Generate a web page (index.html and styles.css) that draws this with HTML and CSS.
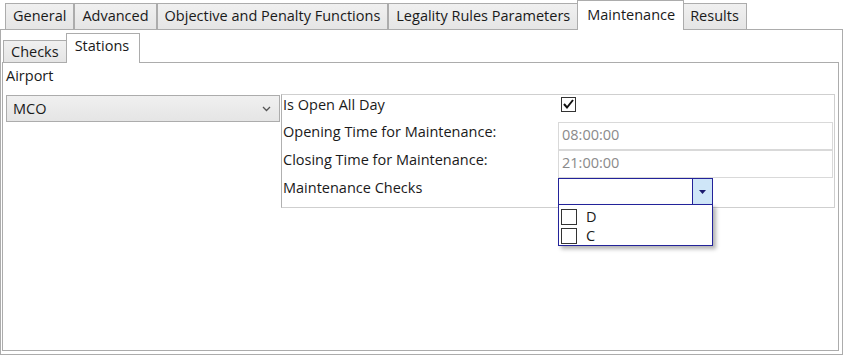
FILE: index.html
```html
<!DOCTYPE html>
<html lang="en">
<head>
    <meta charset="UTF-8">
    <title>Maintenance - Stations</title>
    <link rel="stylesheet" href="styles.css">
</head>
<body>
    <div class="tab-control">
        <div class="tab-strip main-strip">
            <div class="tab">General</div>
            <div class="tab">Advanced</div>
            <div class="tab">Objective and Penalty Functions</div>
            <div class="tab">Legality Rules Parameters</div>
            <div class="tab active">Maintenance</div>
            <div class="tab">Results</div>
        </div>
        <div class="tab-panel outer-panel">
            <div class="tab-strip sub-strip">
                <div class="tab">Checks</div>
                <div class="tab active">Stations</div>
            </div>
            <div class="tab-panel inner-panel">
                <div class="field-label">Airport</div>
                <div class="station-row">
                    <div class="combo airport-combo">
                        <span>MCO</span>
                        <svg class="chevron" width="9" height="6" viewBox="0 0 9 6"><path d="M1 1 L4.5 4.5 L8 1" fill="none" stroke="#555" stroke-width="1.3"/></svg>
                    </div>
                    <div class="prop-grid">
                        <div class="prop-row first">
                            <div class="prop-name">Is Open All Day</div>
                            <div class="prop-value">
                                <span class="checkbox checked">
                                    <svg width="13" height="12" viewBox="0 0 13 12"><path d="M2 6 L5 9.5 L11 2" fill="none" stroke="#111" stroke-width="2"/></svg>
                                </span>
                            </div>
                        </div>
                        <div class="prop-row">
                            <div class="prop-name">Opening Time for Maintenance:</div>
                            <div class="prop-value"><div class="textbox disabled">08:00:00</div></div>
                        </div>
                        <div class="prop-row">
                            <div class="prop-name">Closing Time for Maintenance:</div>
                            <div class="prop-value"><div class="textbox disabled">21:00:00</div></div>
                        </div>
                        <div class="prop-row">
                            <div class="prop-name">Maintenance Checks</div>
                            <div class="prop-value">
                                <div class="check-combo">
                                    <div class="check-combo-text"></div>
                                    <div class="check-combo-button">
                                        <svg width="7" height="4" viewBox="0 0 7 4"><path d="M0 0 H7 L3.5 4 Z" fill="#1b1b6e"/></svg>
                                    </div>
                                    <div class="check-popup">
                                        <div class="check-item"><span class="checkbox"></span>D</div>
                                        <div class="check-item"><span class="checkbox"></span>C</div>
                                    </div>
                                </div>
                            </div>
                        </div>
                    </div>
                </div>
            </div>
        </div>
    </div>
</body>
</html>
```

FILE: styles.css
```css
body {
    margin: 0;
    background: #fff;
    font-family: 'Open Sans', 'Noto Sans', sans-serif;
    font-size: 14.5px;
    color: #1a1a1a;
}

.tab-control {
    width: 843px;
    height: 355px;
    display: flex;
    flex-direction: column;
}

.tab-strip {
    display: flex;
    align-items: flex-end;
}

.main-strip {
    height: 29px;
    padding-left: 5px;
}

.tab {
    height: 26px;
    line-height: 24px;
    padding: 0 7px;
    border: 1px solid #acacac;
    border-bottom: none;
    background: linear-gradient(#f0f0f0, #e5e5e5);
    box-sizing: border-box;
    margin-right: -1px;
    white-space: nowrap;
}

.tab + .tab {
    margin-left: 1px;
}

.tab.active {
    height: 30px;
    line-height: 27px;
    background: #fff;
    margin-bottom: -1px;
    margin-left: 0;
    margin-right: -2px;
    padding: 0 8px 0 9px;
    position: relative;
    z-index: 1;
}

.tab.active + .tab {
    margin-left: 0;
}

.tab-panel {
    border: 1px solid #acacac;
    background: #fff;
    box-sizing: border-box;
}

.outer-panel {
    flex: 1;
    display: flex;
    flex-direction: column;
    padding: 3px 3px 3px 1px;
}

.sub-strip {
    height: 29px;
    padding-left: 1px;
}

.sub-strip .tab {
    height: 22px;
    line-height: 21px;
    padding: 0 8px 0 7px;
}

.sub-strip .tab.active {
    height: 30px;
    line-height: 24px;
    padding: 0 10px 0 8px;
    margin-left: -1px;
}

.inner-panel {
    flex: 1;
    padding: 2px 2px 0 3px;
}

.field-label {
    height: 29px;
    line-height: 22px;
}

.station-row {
    display: flex;
    align-items: flex-start;
}

.combo {
    box-sizing: border-box;
}

.airport-combo {
    width: 274px;
    height: 27px;
    margin-top: 1px;
    border: 1px solid #acacac;
    background: linear-gradient(#f0f0f0, #e5e5e5);
    display: flex;
    align-items: center;
    justify-content: space-between;
    padding: 0 8px 0 6px;
}

.chevron {
    margin-top: 1px;
}

.prop-grid {
    width: 554px;
    margin-left: 1px;
    border: 1px solid #cfcfcf;
    border-left-color: #b0b0b0;
    box-sizing: border-box;
    padding-bottom: 1px;
}

.prop-row {
    display: flex;
    height: 28px;
}

.prop-row.first {
    height: 27px;
}

.prop-name {
    width: 275px;
    padding-left: 1px;
    line-height: 20px;
}

.prop-value {
    flex: 1;
}

.checkbox {
    display: inline-flex;
    align-items: center;
    justify-content: center;
    width: 15px;
    height: 15px;
    border: 1px solid #333;
    box-sizing: border-box;
    background: #fff;
}

.prop-row.first .checkbox {
    margin: 0 0 0 3px;
}

.textbox {
    height: 28px;
    border: 1px solid #d9d9d9;
    box-sizing: border-box;
    line-height: 24px;
    padding-left: 3px;
    margin-right: 1px;
}

.textbox.disabled {
    color: #8a8a8a;
}

.check-combo {
    position: relative;
    width: 155px;
    height: 27px;
    border: 1px solid #23239a;
    box-sizing: border-box;
    display: flex;
    background: #fff;
}

.check-combo-text {
    flex: 1;
}

.check-combo-button {
    width: 19px;
    border-left: 1px solid #23239a;
    background: #cfe6f8;
    display: flex;
    align-items: center;
    justify-content: center;
}

.check-popup {
    position: absolute;
    left: -1px;
    top: 25px;
    width: 155px;
    height: 42px;
    border: 1px solid #23239a;
    box-sizing: border-box;
    background: #fff;
    box-shadow: 3px 3px 4px rgba(0, 0, 0, 0.3);
    padding: 2px 0 0 2px;
    z-index: 5;
}

.check-item {
    height: 19px;
    line-height: 17px;
    display: flex;
    align-items: center;
}

.check-item .checkbox {
    width: 16px;
    height: 16px;
    margin-right: 9px;
}
```
